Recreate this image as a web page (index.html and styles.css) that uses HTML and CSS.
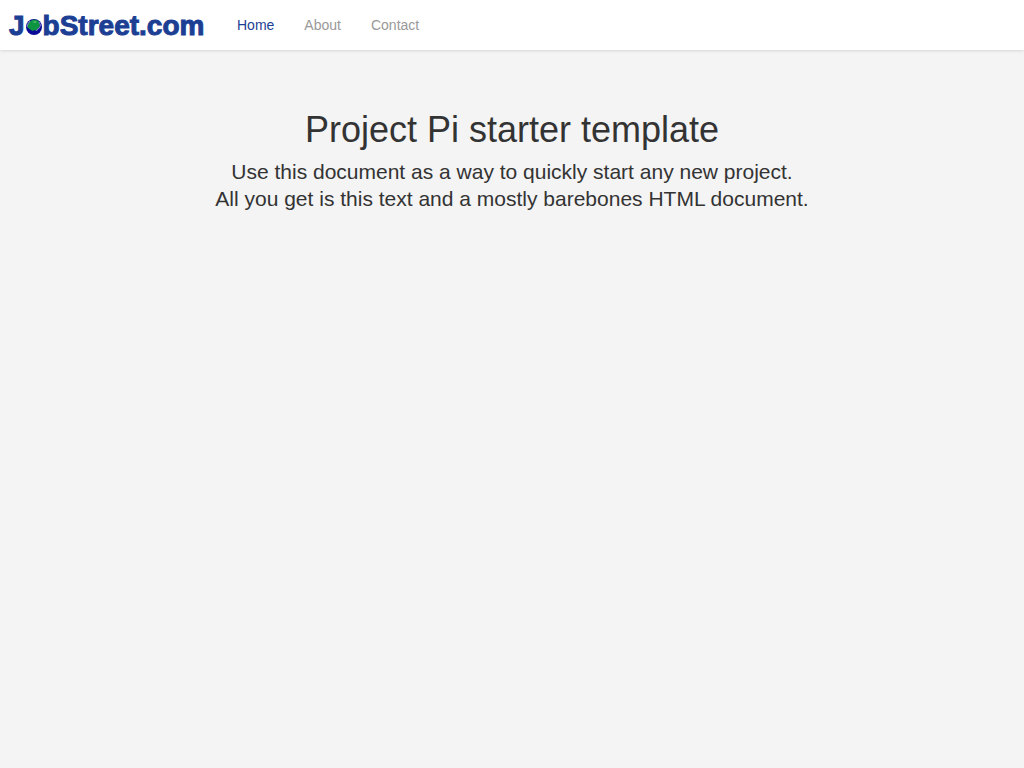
FILE: index.html
```html
<!DOCTYPE html>
<html lang="en">
<head>
<meta charset="utf-8">
<title>Project Pi starter template</title>
<link rel="stylesheet" href="styles.css">
</head>
<body>
<header class="navbar">
  <a class="brand" href="#" aria-label="JobStreet.com">
    <span>J</span><svg class="globe" viewBox="0 0 16 16" aria-hidden="true">
      <circle cx="8" cy="8" r="8" fill="#0a0a96"/>
      <path d="M1 8a7 7 0 0 1 3-6l4-1.500 4 1 2 2.500-.5 4-2 2-1 2-2-1-2 1-3-2z" fill="#0d9440"/>
      <path d="M1 8l1-3 2-3M13 3l1.500 3-1 3-2 1-1 2" fill="none" stroke="#8a7ccc" stroke-width="1"/>
      <path d="M6 3l3-1 2 1-2 1z" fill="#4fb86a"/>
    </svg><span>bStreet.com</span>
  </a>
  <nav class="links">
    <a class="link active" href="#">Home</a>
    <a class="link" href="#about">About</a>
    <a class="link" href="#contact">Contact</a>
  </nav>
</header>
<main class="starter">
  <h1 class="title">Project Pi starter template</h1>
  <p class="lead">Use this document as a way to quickly start any new project.<br>All you get is this text and a mostly barebones HTML document.</p>
</main>
</body>
</html>
```
FILE: styles.css
```css
* { box-sizing: border-box; }
body {
  margin: 0;
  background: #f4f4f4;
  color: #333;
  font: 14px/20px "Liberation Sans", Arial, sans-serif;
}
a { text-decoration: none; }
.navbar {
  display: flex;
  align-items: center;
  min-height: 50px;
  background: #fff;
  box-shadow: 0 1px 3px rgba(0, 0, 0, .12);
}
.brand {
  display: flex;
  align-items: center;
  width: 222px;
  padding: 2px 0 0 9px;
  color: #1c3f94;
  font-size: 28px;
  line-height: 30px;
  font-weight: 700;
  -webkit-text-stroke: 1px #1c3f94;
}
.globe { width: 16px; height: 16px; margin: 1px 1px 0; }
.links { display: flex; }
.link { padding: 15px; color: #999; }
.active { color: #1c3f94; }
.starter { padding: 40px 15px; text-align: center; }
.title { margin: 20px 0 8px; font-size: 36px; line-height: 40px; font-weight: 400; }
.lead { margin: 0 0 20px; font-size: 21px; line-height: 27px; }
```
